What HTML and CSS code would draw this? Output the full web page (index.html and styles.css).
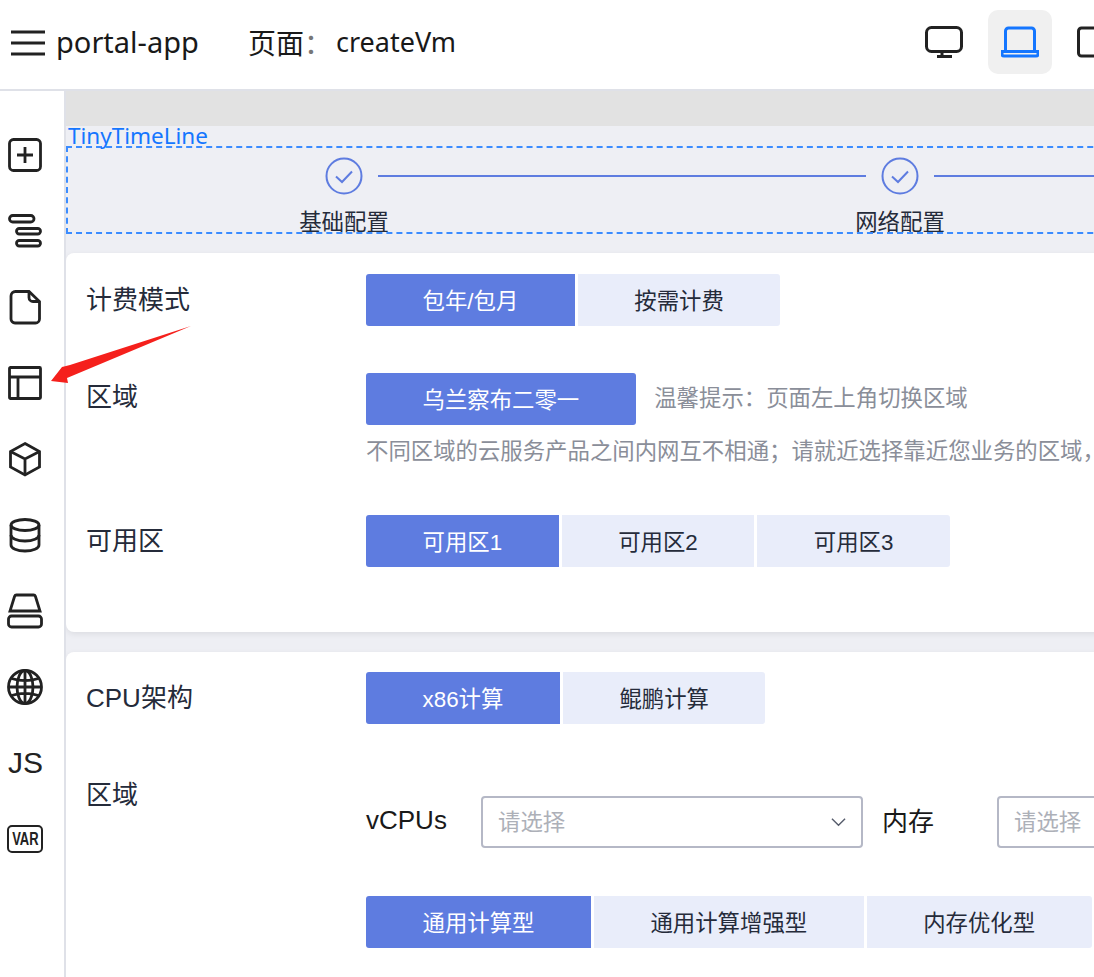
FILE: index.html
```html
<!DOCTYPE html>
<html lang="zh-CN">

<head>
  <meta charset="UTF-8">
  <meta name="viewport" content="width=device-width, initial-scale=1.0">
  <title>portal-app createVm</title>
  <link rel="stylesheet" href="styles.css">
</head>

<body>
  <div class="app">
    <div class="header">
      <svg class="menu-icon" viewBox="0 0 34 26">
        <path d="M0 2h34M0 13h34M0 24h34" />
      </svg>
      <span class="app-name">portal-app</span>
      <span class="page-label">页面<i>：</i></span>
      <span class="page-name">createVm</span>
      <div class="devices">
        <div class="device">
          <svg viewBox="0 0 38 38">
            <rect x="1.500" y="4.500" width="35" height="24" rx="5" />
            <path d="M17 28.500v4.500M12 33.500h15M22 28.500v1" />
          </svg>
        </div>
        <div class="device active">
          <svg viewBox="0 0 38 38">
            <path d="M4.500 28V8a3 3 0 0 1 3-3h23a3 3 0 0 1 3 3v20" />
            <path d="M1 28.500h36v2.500a2 2 0 0 1-2 2H3a2 2 0 0 1-2-2z" />
          </svg>
        </div>
        <div class="device">
          <svg viewBox="0 0 38 38">
            <rect x="1.500" y="5" width="35" height="28" rx="3" />
          </svg>
        </div>
      </div>
    </div>

    <div class="body">
      <div class="sidebar">
        <svg class="side-icon" viewBox="0 0 34 34">
          <rect x="1.500" y="1.500" width="31" height="31" rx="4" />
          <path d="M17 9v16M9 17h16" />
        </svg>
        <svg class="side-icon" viewBox="0 0 34 34">
          <rect x="1.500" y="1.500" width="24.500" height="6.500" rx="3.250" />
          <rect x="8.500" y="14.500" width="24" height="5.500" rx="2.750" />
          <rect x="8.500" y="26.500" width="24" height="5.500" rx="2.750" />
        </svg>
        <svg class="side-icon" viewBox="0 0 34 34">
          <path d="M7.500 1.500h13.500l10.500 10V29a4 4 0 0 1-4 4H7a4 4 0 0 1-4-4V6a4.500 4.500 0 0 1 4.500-4.500z" />
          <path d="M21 2v5.500a4 4 0 0 0 4 4h6" />
        </svg>
        <svg class="side-icon" viewBox="0 0 34 34">
          <rect x="1.500" y="1.500" width="31" height="31" rx="1" />
          <path d="M2 11h30M10 11v22" />
        </svg>
        <svg class="side-icon" viewBox="0 0 34 34">
          <path d="M17 1.500l14.500 8v15.500L17 33 2.500 25V9.500z" />
          <path d="M2.500 9.500L17 17l14.500-7.500M17 17v16" />
        </svg>
        <svg class="side-icon" viewBox="0 0 34 34">
          <ellipse cx="17" cy="7" rx="14" ry="5.500" />
          <path d="M3 7v20c0 3.300 6 6 14 6s14-2.700 14-6V7" />
          <path d="M3 17c0 3.300 6 6 14 6s14-2.700 14-6" />
        </svg>
        <svg class="side-icon" viewBox="0 0 34 34">
          <path d="M8.500 1h17a2 2 0 0 1 1.900 1.300L32 17H2L6.600 2.300A2 2 0 0 1 8.500 1z" />
          <rect x="0.500" y="22" width="33" height="11" rx="3" />
        </svg>
        <svg class="side-icon" viewBox="0 0 34 34">
          <circle cx="17" cy="17" r="16.500" />
          <ellipse cx="17" cy="17" rx="8" ry="16.500" />
          <path d="M17 0.500v33M0.500 17h33M3.500 8.500c8 2.500 19 2.500 27 0M3.500 25.500c8-2.500 19-2.500 27 0" />
        </svg>
        <div class="side-text">JS</div>
        <div class="side-var"><span>VAR</span></div>
      </div>

      <div class="canvas">
        <div class="canvas-top"></div>
        <div class="canvas-main">
          <div class="timeline">
            <span class="timeline-tag">TinyTimeLine</span>
            <div class="step">
              <div class="step-head">
                <span class="step-line none"></span>
                <svg class="step-dot" viewBox="0 0 38 38">
                  <circle cx="19" cy="19" r="17.500" />
                  <path d="M11 19.500l6 5.500 10-10.500" />
                </svg>
                <span class="step-line"></span>
              </div>
              <div class="step-name">基础配置</div>
            </div>
            <div class="step">
              <div class="step-head">
                <span class="step-line"></span>
                <svg class="step-dot" viewBox="0 0 38 38">
                  <circle cx="19" cy="19" r="17.500" />
                  <path d="M11 19.500l6 5.500 10-10.500" />
                </svg>
                <span class="step-line"></span>
              </div>
              <div class="step-name">网络配置</div>
            </div>
          </div>

          <div class="card">
            <div class="form-row">
              <div class="form-label">计费模式</div>
              <div class="form-value">
                <div class="btn-group">
                  <span class="btn active">包年/包月</span>
                  <span class="btn">按需计费</span>
                </div>
              </div>
            </div>
            <div class="form-row">
              <div class="form-label raised">区域</div>
              <div class="form-value">
                <div class="btn-line">
                  <div class="btn-group">
                    <span class="btn active">乌兰察布二零一</span>
                  </div>
                  <span class="tip">温馨提示：页面左上角切换区域</span>
                </div>
                <div class="desc">不同区域的云服务产品之间内网互不相通；请就近选择靠近您业务的区域<span class="desc-end">，</span></div>
              </div>
            </div>
            <div class="form-row">
              <div class="form-label">可用区</div>
              <div class="form-value">
                <div class="btn-group">
                  <span class="btn active">可用区1</span>
                  <span class="btn">可用区2</span>
                  <span class="btn">可用区3</span>
                </div>
              </div>
            </div>
          </div>

          <div class="card second">
            <div class="form-row tight">
              <div class="form-label">CPU架构</div>
              <div class="form-value">
                <div class="btn-group">
                  <span class="btn active">x86计算</span>
                  <span class="btn">鲲鹏计算</span>
                </div>
              </div>
            </div>
            <div class="form-row">
              <div class="form-label">区域</div>
              <div class="form-value spec">
                <div class="filters">
                  <span class="filter-label">vCPUs</span>
                  <div class="select">
                    <span>请选择</span>
                    <svg viewBox="0 0 16 10">
                      <path d="M1 1.500l7 7 7-7" />
                    </svg>
                  </div>
                  <span class="filter-label second-label">内存</span>
                  <div class="select">
                    <span>请选择</span>
                    <svg viewBox="0 0 16 10">
                      <path d="M1 1.500l7 7 7-7" />
                    </svg>
                  </div>
                </div>
                <div class="btn-group">
                  <span class="btn active">通用计算型</span>
                  <span class="btn">通用计算增强型</span>
                  <span class="btn">内存优化型</span>
                </div>
              </div>
            </div>
          </div>
        </div>
      </div>
    </div>

    <!-- annotation arrow drawn on top of the screenshot -->
    <svg class="arrow" viewBox="0 0 1094 977">
      <polygon points="191,326 70,365 62,367 51,381 68,383 67,378" />
    </svg>
  </div>
</body>

</html>
```

FILE: styles.css
```css
* {
  box-sizing: border-box;
}

body {
  margin: 0;
  padding: 0;
  font-family: "Noto Sans", "Noto Sans CJK SC", sans-serif;
  color: #252b3a;
}

.app {
  position: relative;
  width: 1094px;
  height: 977px;
  overflow: hidden;
  background: #fff;
}

/* top bar */
.header {
  display: flex;
  align-items: center;
  width: 1140px;
  height: 91px;
  padding: 0 12px 6px 11px;
  border-bottom: 2px solid #dfe1e8;
  color: #191919;
}

.menu-icon {
  width: 34px;
  height: 26px;
  margin: 3px 12px 0 0;
  fill: none;
  stroke: #222;
  stroke-width: 3;
}

.app-name {
  width: 191px;
  margin-left: -1px;
  margin-right: 1px;
  font-size: 29px;
}

.page-label {
  width: 88px;
  font-size: 28px;
}

.page-label i {
  font-style: normal;
  color: #777;
}

.page-name {
  font-size: 27px;
}

.devices {
  display: flex;
  gap: 12px;
  margin-left: auto;
}

.device {
  display: flex;
  align-items: center;
  justify-content: center;
  width: 64px;
  height: 64px;
  border-radius: 10px;
}

.device svg {
  width: 38px;
  height: 38px;
  fill: none;
  stroke: #222;
  stroke-width: 3;
}

.device.active {
  background: #f0f0f0;
}

.device.active svg {
  stroke: #1476ff;
}

.body {
  display: flex;
  height: 886px;
}

/* left icon bar */
.sidebar {
  display: flex;
  flex-direction: column;
  flex: none;
  gap: 42px;
  width: 66px;
  padding: 47px 0 0 8px;
  border-right: 2px solid #dfe1e8;
}

.side-icon {
  flex: none;
  width: 34px;
  height: 34px;
  overflow: visible;
  fill: none;
  stroke: #222;
  stroke-width: 2.800;
}

.side-text {
  width: 34px;
  height: 34px;
  font-family: "Liberation Sans", sans-serif;
  font-size: 30px;
  line-height: 34px;
  text-align: center;
  color: #222;
}

.side-var {
  display: flex;
  align-items: center;
  justify-content: center;
  width: 36px;
  height: 28px;
  margin: 3px 0 0 -1px;
  border: 2.500px solid #222;
  border-radius: 5px;
}

.side-var span {
  font-family: "Liberation Sans", sans-serif;
  font-size: 18px;
  font-weight: 700;
  line-height: 1;
  color: #222;
  transform: scaleX(0.72);
}

/* canvas */
.canvas {
  flex: 1;
  min-width: 0;
  overflow: hidden;
}

.canvas-top {
  height: 35px;
  background: #e2e2e2;
}

.canvas-main {
  width: 1300px;
  height: 851px;
  padding-top: 20px;
  background: #eeeff4;
}

.timeline {
  position: relative;
  display: flex;
  width: 1668px;
  height: 88px;
  padding-top: 11px;
  outline: 2px dashed #3b8cff;
  outline-offset: -2px;
}

.timeline-tag {
  position: absolute;
  left: 2px;
  top: -22px;
  font-size: 22.500px;
  line-height: 24px;
  color: #1476ff;
}

.step {
  flex: none;
  width: 556px;
}

.step-head {
  display: flex;
  align-items: center;
}

.step-line {
  flex: 1;
  height: 2px;
  background: #5e7ce0;
}

.step-line:first-child {
  margin-right: 15px;
}

.step-line:last-child {
  margin-left: 15px;
}

.step-line.none {
  background: none;
}

.step-dot {
  flex: none;
  width: 38px;
  height: 38px;
  fill: none;
  stroke: #5e7ce0;
  stroke-width: 2;
}

.step-name {
  margin-top: 10px;
  font-size: 22.400px;
  line-height: 34px;
  text-align: center;
}

/* cards */
.card {
  height: 379px;
  margin-top: 19px;
  padding: 21px 0 0 20px;
  font-family: "Liberation Sans", "Noto Sans CJK SC", sans-serif;
  background: #fff;
  border-radius: 8px;
  box-shadow: 0 2px 6px rgba(0, 0, 0, 0.08);
}

.card.second {
  height: 400px;
  margin-top: 20px;
  padding-top: 20px;
}

.form-row {
  display: flex;
  margin-bottom: 47px;
}

.form-row.tight {
  margin-bottom: 45px;
}

.form-label {
  flex: none;
  width: 280px;
  font-size: 26px;
  line-height: 52px;
}

.form-label.raised {
  margin-top: -2px;
}

.form-value {
  min-width: 0;
}

.form-value.spec {
  padding-top: 27px;
}

.btn-line {
  display: flex;
  align-items: center;
  gap: 18.500px;
}

.btn-group {
  display: flex;
  gap: 3px;
}

.btn {
  height: 52px;
  padding: 0 56.500px;
  font-size: 22.400px;
  line-height: 55px;
  white-space: nowrap;
  background: #e9edfa;
}

.btn:first-child {
  border-radius: 3px 0 0 3px;
}

.btn:last-child {
  border-radius: 0 3px 3px 0;
}

.btn:only-child {
  border-radius: 3px;
}

.btn.active {
  color: #fff;
  background: #5e7ce0;
}

.tip {
  margin-top: -6px;
  font-size: 22.400px;
  color: #8a8e99;
}

.desc {
  margin-top: 11px;
  font-size: 22.400px;
  line-height: 32px;
  white-space: nowrap;
  color: #8a8e99;
}

/* the comma sits right at the window edge */
.desc-end {
  letter-spacing: -12px;
}

.filters {
  display: flex;
  align-items: center;
  margin-bottom: 48px;
}

.filter-label {
  flex: none;
  width: 115px;
  padding-bottom: 3px;
  font-size: 26px;
  color: #191919;
}

.filter-label.second-label {
  margin-left: 19px;
  padding-bottom: 5px;
}

.select {
  display: flex;
  flex: none;
  align-items: center;
  justify-content: space-between;
  width: 382px;
  height: 52px;
  padding: 0 15px 4px;
  border: 2px solid #b5b8c6;
  border-radius: 4px;
  font-size: 22.400px;
  color: #adb0b8;
}

.select svg {
  width: 15px;
  height: 10px;
  margin-top: 4px;
  fill: none;
  stroke: #575d6c;
  stroke-width: 1.500;
}

.arrow {
  position: absolute;
  left: 0;
  top: 0;
  width: 1094px;
  height: 977px;
  fill: #f5201c;
  pointer-events: none;
}
```
